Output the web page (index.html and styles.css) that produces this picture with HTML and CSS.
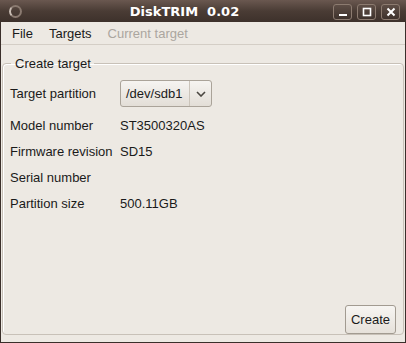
FILE: index.html
```html
<!DOCTYPE html>
<html lang="en">
<head>
<meta charset="UTF-8">
<title>DiskTRIM 0.02</title>
<link rel="stylesheet" href="styles.css">
</head>
<body>
<div class="window">
  <div class="titlebar">
    <span class="app-icon"></span>
    <span class="title">DiskTRIM&nbsp; 0.02</span>
    <div class="controls">
      <span class="ctl">
        <svg width="10" height="10" viewBox="0 0 10 10"><rect x="1" y="7" width="8" height="2" fill="#fff"/></svg>
      </span>
      <span class="ctl">
        <svg width="10" height="10" viewBox="0 0 10 10"><rect x="1.5" y="1.5" width="7" height="7" fill="none" stroke="#fff" stroke-width="1.6"/></svg>
      </span>
      <span class="ctl">
        <svg width="10" height="10" viewBox="0 0 10 10"><path d="M1.5 1.5 L8.5 8.5 M8.5 1.5 L1.5 8.5" stroke="#fff" stroke-width="2"/></svg>
      </span>
    </div>
  </div>

  <div class="menubar">
    <span class="menu-item">File</span>
    <span class="menu-item">Targets</span>
    <span class="menu-item disabled">Current target</span>
  </div>

  <div class="content">
    <fieldset class="frame">
      <legend>Create target</legend>
      <div class="fields">
        <span class="label first">Target partition</span>
        <span class="combo">
          <span class="combo-text">/dev/sdb1</span>
          <span class="combo-arrow">
            <svg width="10" height="6" viewBox="0 0 10 6"><path d="M1 1 L5 5 L9 1" fill="none" stroke="#4a4640" stroke-width="1.6"/></svg>
          </span>
        </span>
        <span class="label">Model number</span>
        <span class="value">ST3500320AS</span>
        <span class="label">Firmware revision</span>
        <span class="value">SD15</span>
        <span class="label">Serial number</span>
        <span class="value"></span>
        <span class="label">Partition size</span>
        <span class="value">500.11GB</span>
      </div>
      <div class="actions">
        <button class="btn">Create</button>
      </div>
    </fieldset>
  </div>
</div>
</body>
</html>
```

FILE: styles.css
```css
body {
  margin: 0;
  padding: 0;
  font-family: "Liberation Sans", Arial, sans-serif;
  font-size: 13px;
  color: #1a1a1a;
  background-color: #3a2f2a;
}

.window {
  width: 406px;
  height: 343px;
  box-sizing: border-box;
  display: flex;
  flex-direction: column;
  background-color: #ede9e3;
  border: 1px solid #3a2f2a;
  border-top: none;
}

.titlebar {
  height: 22px;
  flex: none;
  display: flex;
  align-items: center;
  background: linear-gradient(#6a5850, #4a3c35 50%, #3d312b);
  margin: 0 -1px;
  padding: 0 6px 0 8px;
}

.app-icon {
  width: 9px;
  height: 9px;
  border-radius: 50%;
  border: 2px solid #8a7a70;
  border-left-color: #c9bdb4;
  margin-left: 1px;
}

.title {
  flex: 1;
  text-align: center;
  color: #fff;
  font-family: "DejaVu Sans", sans-serif;
  font-weight: bold;
  font-size: 13px;
  padding-left: 14px;
  white-space: pre;
}

.controls {
  display: flex;
  gap: 5px;
  padding-top: 1px;
}

.ctl {
  width: 19px;
  height: 16px;
  box-sizing: border-box;
  display: flex;
  align-items: center;
  justify-content: center;
  border: 1px solid #8c7b70;
  border-radius: 3px;
  background: linear-gradient(#5e4e46, #3e322c);
}

.menubar {
  height: 23px;
  flex: none;
  display: flex;
  align-items: center;
  padding: 1px 3px 0 3px;
  box-sizing: border-box;
  border-bottom: 1px solid #d4cec6;
}

.menu-item {
  padding: 0 8px;
}

.menu-item.disabled {
  color: #aba69f;
}

.content {
  flex: 1;
  display: flex;
  flex-direction: column;
  padding: 11px 1px 7px 1px;
}

.frame {
  flex: 1;
  margin: 0;
  padding: 16px 7px 0 7px;
  display: flex;
  flex-direction: column;
  border: 1px solid #c8c1b8;
  border-radius: 4px;
  box-shadow: inset 1px 1px 0 #fff;
}

.frame legend {
  padding: 0 3px 0 4px;
  margin-left: 1px;
}

.fields {
  display: grid;
  grid-template-columns: 110px auto;
  grid-auto-rows: 25.8px;
  align-items: center;
  justify-items: start;
}

.fields .combo {
  height: 27px;
  box-sizing: border-box;
  display: flex;
  align-items: stretch;
  border: 1px solid #aaa399;
  border-radius: 3px;
  background: linear-gradient(#f6f4f1, #e3ded7);
  margin-bottom: 12px;
}

.fields .label.first {
  margin-bottom: 12px;
}

.combo-text {
  display: flex;
  align-items: center;
  padding: 0 7px 0 5px;
}

.combo-arrow {
  display: flex;
  align-items: center;
  justify-content: center;
  width: 21px;
  border-left: 1px solid #cbc4ba;
}

.actions {
  margin-top: auto;
  display: flex;
  justify-content: flex-end;
}

.btn {
  font-family: "Liberation Sans", Arial, sans-serif;
  font-size: 13px;
  color: #1a1a1a;
  height: 29px;
  padding: 0 5px;
  border: 1px solid #a29b91;
  border-radius: 3px;
  background: linear-gradient(#f7f5f2, #e6e1da);
}
```
